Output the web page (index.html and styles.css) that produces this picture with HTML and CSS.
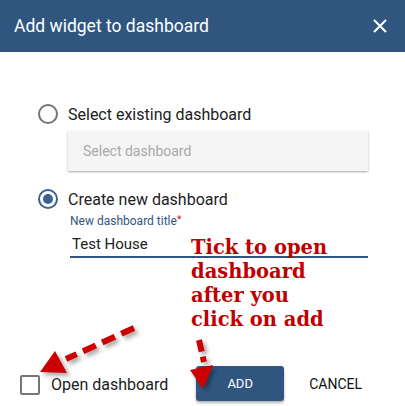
FILE: index.html
```html
<!DOCTYPE html>
<html lang="en">

<head>
    <meta charset="UTF-8">
    <meta name="viewport" content="width=device-width, initial-scale=1.0">
    <title>Add widget to dashboard</title>
    <link rel="stylesheet" href="styles.css">
</head>

<body>
    <div class="dialog">
        <div class="dialog-header">
            <span class="dialog-title">Add widget to dashboard</span>
            <svg class="close-icon" width="14" height="14" viewBox="0 0 14 14">
                <path d="M1 1 L13 13 M13 1 L1 13" stroke="#fff" stroke-width="2" fill="none" />
            </svg>
        </div>

        <div class="dialog-content">
            <div class="radio-row">
                <span class="radio"></span>
                <span class="radio-label">Select existing dashboard</span>
            </div>
            <div class="select-box">Select dashboard</div>

            <div class="radio-row radio-row-second">
                <span class="radio checked"></span>
                <span class="radio-label">Create new dashboard</span>
            </div>
            <div class="field">
                <div class="field-label">New dashboard title<span class="required">*</span></div>
                <div class="field-input">Test House</div>
            </div>
        </div>

        <div class="dialog-actions">
            <div class="check-row">
                <span class="checkbox"></span>
                <span class="check-label">Open dashboard</span>
            </div>
            <div class="buttons">
                <button class="btn-add">ADD</button>
                <button class="btn-cancel">CANCEL</button>
            </div>
        </div>

        <div class="note">Tick to open<br>dashboard<br>after you<br>click on add</div>

        <svg class="arrows" width="405" height="406" viewBox="0 0 405 406">
            <defs>
                <filter id="shadow" x="-20%" y="-20%" width="140%" height="140%">
                    <feDropShadow dx="3" dy="3" stdDeviation="2" flood-color="#000" flood-opacity="0.35" />
                </filter>
            </defs>
            <g filter="url(#shadow)">
                <path d="M134 328 L66 359" stroke="#cc0000" stroke-width="6" stroke-dasharray="14 7" fill="none" />
                <polygon points="40,372 55,351 67,373" fill="#cc0000" />
                <path d="M199 340 L204 362" stroke="#cc0000" stroke-width="6" stroke-dasharray="12 5" fill="none" />
                <polygon points="190,370 213,365 203,389" fill="#cc0000" />
            </g>
        </svg>
    </div>
</body>

</html>
```

FILE: styles.css
```css
body {
    margin: 0;
    font-family: Roboto, "Liberation Sans", sans-serif;
    background-color: #fff;
}

.dialog {
    position: relative;
    width: 405px;
    height: 406px;
    overflow: hidden;
}

.dialog-header {
    height: 52px;
    background-color: #305680;
    color: #fff;
    display: flex;
    align-items: center;
    justify-content: space-between;
    padding: 0 18px 0 14px;
}

.dialog-title {
    font-size: 17.5px;
}

.dialog-content {
    padding: 52px 37px 0 38px;
}

.radio-row {
    display: flex;
    align-items: center;
    height: 20px;
}

.radio-row-second {
    margin-top: 18px;
}

.radio {
    width: 16px;
    height: 16px;
    border: 2px solid #757575;
    border-radius: 50%;
    position: relative;
    flex-shrink: 0;
}

.radio.checked {
    border-color: #3b6294;
}

.radio.checked::after {
    content: "";
    position: absolute;
    left: 3px;
    top: 3px;
    width: 10px;
    height: 10px;
    border-radius: 50%;
    background-color: #3b6294;
}

.radio-label {
    font-size: 16px;
    color: #212121;
    margin-left: 10px;
}

.select-box {
    margin: 7px 0 0 30px;
    height: 40px;
    line-height: 40px;
    background-color: #f5f5f5;
    box-shadow: 0 1px 2px rgba(0, 0, 0, 0.35);
    padding-left: 15px;
    font-size: 14px;
    color: #a9a9a9;
}

.field {
    margin-left: 32px;
}

.field-label {
    font-size: 12px;
    color: #305680;
    margin-top: 5px;
}

.required {
    color: #d50000;
    font-size: 10px;
    vertical-align: top;
}

.field-input {
    font-size: 15px;
    color: #212121;
    padding: 7px 0 3px 2px;
    border-bottom: 2px solid #305680;
}

.dialog-actions {
    position: absolute;
    left: 0;
    right: 0;
    bottom: 5px;
    display: flex;
    align-items: center;
    justify-content: space-between;
    padding: 0 43px 0 20px;
}

.check-row {
    display: flex;
    align-items: center;
    margin-top: 2px;
}

.checkbox {
    width: 16px;
    height: 16px;
    border: 2px solid #757575;
    border-radius: 2px;
}

.check-label {
    font-size: 16px;
    color: #212121;
    margin-left: 11px;
}

.buttons {
    display: flex;
    align-items: center;
    gap: 25px;
}

.btn-add {
    width: 88px;
    height: 35px;
    border: none;
    border-radius: 3px;
    background-color: #305680;
    color: #fff;
    font-family: Roboto, "Liberation Sans", sans-serif;
    font-size: 13px;
    box-shadow: 0 2px 3px rgba(0, 0, 0, 0.3);
}

.btn-cancel {
    border: none;
    background: none;
    padding: 0;
    font-family: Roboto, "Liberation Sans", sans-serif;
    font-size: 14px;
    color: #111;
}

.note {
    position: absolute;
    left: 191px;
    top: 236px;
    font-family: "DejaVu Serif", serif;
    font-weight: bold;
    font-size: 19.5px;
    line-height: 24px;
    color: #c00000;
}

.arrows {
    position: absolute;
    left: 0;
    top: 0;
    pointer-events: none;
}
```
